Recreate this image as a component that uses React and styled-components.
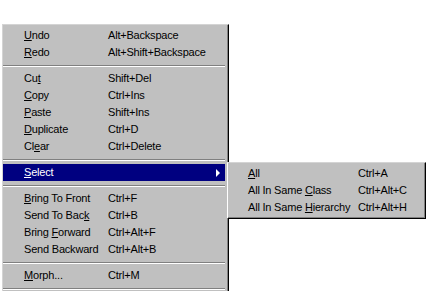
import styled, { createGlobalStyle } from 'styled-components';

const Global = createGlobalStyle`
	body {
		margin: 0;
		background: #fff;
		font-family: "Liberation Sans", Arial, sans-serif;
		font-size: 11px;
		letter-spacing: -0.2px;
		color: #000;
	}
`;

const Page = styled.div`
	height: 291px;
	box-sizing: border-box;
	overflow: hidden;
	padding: 24px 0 0 2px;
`;

const Menu = styled.div`
	position: relative;
	width: 227px;
	box-sizing: border-box;
	background: #c0c0c0;
	border-top: 1px solid #d4d4d4;
	border-left: 1px solid #d4d4d4;
	border-right: 1px solid #000;
	box-shadow: inset -1px 0 #808080;
	padding: 2px 3px 20px 0;
`;

const Row = styled.div`
	position: relative;
	display: flex;
	height: 17px;
	line-height: 17px;
	padding-left: ${(p) => p.$indent}px;
	background: ${(p) => (p.$active ? '#000080' : 'transparent')};
	color: ${(p) => (p.$active ? '#fff' : '#000')};
	white-space: nowrap;
`;

const Label = styled.span`
	width: ${(p) => p.$w}px;
`;

const Arrow = styled.span`
	position: absolute;
	right: 5px;
	top: 5px;
	border-left: 4px solid #fff;
	border-top: 4px solid transparent;
	border-bottom: 4px solid transparent;
`;

const Separator = styled.div`
	height: 9px;
	display: flex;
	flex-direction: column;
	justify-content: center;
	&::before,
	&::after {
		content: '';
		height: 1px;
	}
	&::before {
		background: #808080;
	}
	&::after {
		background: #fff;
	}
`;

const SubMenu = styled.div`
	position: absolute;
	left: 224px;
	top: 137px;
	width: 199px;
	box-sizing: border-box;
	background: #c0c0c0;
	border-top: 1px solid #d4d4d4;
	border-left: 1px solid #fff;
	border-right: 1px solid #000;
	border-bottom: 1px solid #000;
	box-shadow: inset -1px -1px #808080;
	padding: 2px;
`;

const groups = [
	[
		['Undo', 0, 'Alt+Backspace'],
		['Redo', 0, 'Alt+Shift+Backspace'],
	],
	[
		['Cut', 2, 'Shift+Del'],
		['Copy', 0, 'Ctrl+Ins'],
		['Paste', 0, 'Shift+Ins'],
		['Duplicate', 0, 'Ctrl+D'],
		['Clear', 2, 'Ctrl+Delete'],
	],
	[['Select', 0, '', true]],
	[
		['Bring To Front', 0, 'Ctrl+F'],
		['Send To Back', 11, 'Ctrl+B'],
		['Bring Forward', 6, 'Ctrl+Alt+F'],
		['Send Backward', -1, 'Ctrl+Alt+B'],
	],
	[['Morph...', 0, 'Ctrl+M']],
];

const subItems = [
	['All', 0, 'Ctrl+A'],
	['All In Same Class', 12, 'Ctrl+Alt+C'],
	['All In Same Hierarchy', 12, 'Ctrl+Alt+H'],
];

const Mnemonic = ({ text, at }) =>
	at < 0 ? (
		text
	) : (
		<>
			{text.slice(0, at)}
			<u>{text[at]}</u>
			{text.slice(at + 1)}
		</>
	);

export default function App() {
	return (
		<Page>
			<Global />
			<Menu>
				{groups.map((g, gi) => (
					<div key={gi}>
						{gi > 0 && <Separator />}
						{g.map(([text, at, key, sub]) => (
							<Row key={text} $indent={21} $active={sub}>
								<Label $w={84}>
									<Mnemonic text={text} at={at} />
								</Label>
								<span>{key}</span>
								{sub && <Arrow />}
							</Row>
						))}
					</div>
				))}
				<Separator />
				<SubMenu>
					{subItems.map(([text, at, key]) => (
						<Row key={text} $indent={18}>
							<Label $w={110}>
								<Mnemonic text={text} at={at} />
							</Label>
							<span>{key}</span>
						</Row>
					))}
				</SubMenu>
			</Menu>
		</Page>
	);
}
